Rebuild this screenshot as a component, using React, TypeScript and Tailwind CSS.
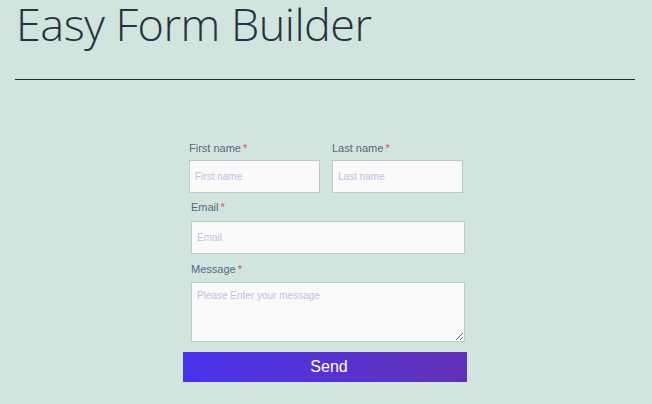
import React from "react";

function Label({ text }: { text: string }) {
  return (
    <label className="block h-[14px] text-[11px] leading-[14px] text-[#56648a]">
      {text}
      <span className="ml-[2px] text-[#e04a5e]">*</span>
    </label>
  );
}

const inputCls =
  "block w-full h-[33px] border border-[#b9cccb] bg-[#fafafa] px-[5px] text-[10px] text-[#333] outline-none placeholder:text-[#c4bee2] font-['Liberation_Sans',Arial,sans-serif]";

export default function App() {
  return (
    <div className="min-h-[404px] w-full bg-[#d2e4de] font-['Liberation_Sans',Arial,sans-serif]">
      <div className="pl-[15px] pr-[17px]">
        <h1 className="pl-[1px] text-[45px] leading-[48px] font-light text-[#26323f] font-['Open_Sans',sans-serif] tracking-[-0.5px] whitespace-nowrap">
          Easy Form Builder
        </h1>
        <div className="mt-[31px] h-px bg-[#1f2d38]" />
      </div>
      <form className="ml-[183px] mt-[61px] w-[284px]" onSubmit={(e) => e.preventDefault()}>
        <div className="flex gap-[12px] pl-[6px] pr-[4px]">
          <div className="w-[131px]">
            <Label text="First name" />
            <input className={`mt-[5px] ${inputCls}`} placeholder="First name" />
          </div>
          <div className="w-[131px]">
            <Label text="Last name" />
            <input className={`mt-[5px] ${inputCls}`} placeholder="Last name" />
          </div>
        </div>
        <div className="mt-[7px] pl-[8px] pr-[2px]">
          <Label text="Email" />
          <input className={`mt-[7px] ${inputCls}`} placeholder="Email" />
        </div>
        <div className="mt-[8px] pl-[8px] pr-[2px]">
          <Label text="Message" />
          <textarea
            className="mt-[6px] block h-[60px] w-full resize-y border border-[#b9cccb] bg-[#fafafa] px-[5px] py-[7px] text-[10px] leading-[12px] text-[#333] outline-none placeholder:text-[#c4bee2] font-['Liberation_Sans',Arial,sans-serif]"
            placeholder="Please Enter your message"
          />
        </div>
        <button
          type="submit"
          className="mt-[10px] block h-[30px] w-full bg-gradient-to-r from-[#4832ec] to-[#6230b6] pl-[8px] text-[16px] text-white font-['Liberation_Sans',Arial,sans-serif]"
        >
          Send
        </button>
      </form>
    </div>
  );
}
